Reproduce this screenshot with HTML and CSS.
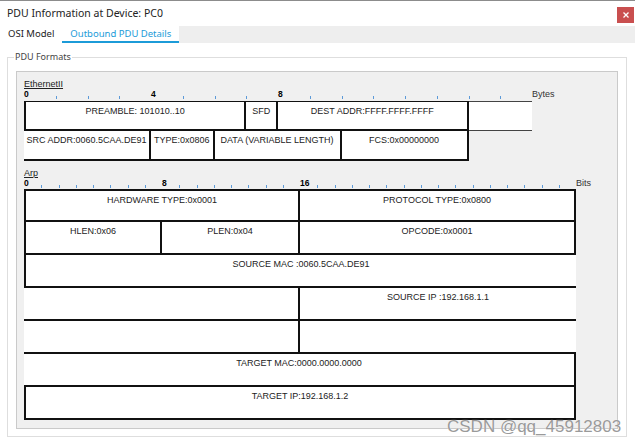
FILE: index.html
```html
<!DOCTYPE html>
<html lang="en">
<head>
    <meta charset="UTF-8">
    <title>PDU Information at Device: PC0</title>
    <link rel="stylesheet" href="styles.css">
</head>
<body>
    <div class="window">
        <div class="titlebar">
            <span class="title">PDU Information at Device: PC0</span>
            <button class="close" aria-label="Close">
                <svg width="6" height="6" viewBox="0 0 6 6"><path d="M0.5 0.5 L5.5 5.5 M5.5 0.5 L0.5 5.5" stroke="#fff" stroke-width="1.3"/></svg>
            </button>
        </div>
        <div class="tabs">
            <div class="tab">OSI Model</div>
            <div class="tab active">Outbound PDU Details</div>
            <div class="tab-fill"></div>
        </div>

        <div class="content">
            <fieldset class="group">
                <legend>PDU Formats</legend>
                <div class="panel">
                    <!-- Ethernet II frame, scale in bytes -->
                    <div class="pdu-name">EthernetII</div>
                    <div class="ruler bytes">
                        <span class="mark num">0</span><span class="mark"></span><span class="mark"></span><span class="mark"></span>
                        <span class="mark num">4</span><span class="mark"></span><span class="mark"></span><span class="mark"></span>
                        <span class="mark num">8</span><span class="mark"></span><span class="mark"></span><span class="mark"></span>
                        <span class="mark"></span><span class="mark"></span><span class="mark"></span><span class="mark"></span>
                        <span class="unit">Bytes</span>
                    </div>
                    <div class="frame eth-frame">
                        <div class="cell s7 edge cap-thin">PREAMBLE: 101010..10</div>
                        <div class="cell s1 cap-thin">SFD</div>
                        <div class="cell s6 cap-thin">DEST ADDR:FFFF.FFFF.FFFF</div>
                        <div class="cell s2 spare"></div>

                        <div class="cell s4">SRC ADDR:0060.5CAA.DE91</div>
                        <div class="cell s2">TYPE:0x0806</div>
                        <div class="cell s4">DATA (VARIABLE LENGTH)</div>
                        <div class="cell s4">FCS:0x00000000</div>
                    </div>

                    <!-- ARP packet, scale in bits -->
                    <div class="pdu-name arp-name">Arp</div>
                    <div class="ruler bits">
                        <span class="mark num">0</span><span class="mark"></span><span class="mark"></span><span class="mark"></span><span class="mark"></span><span class="mark"></span><span class="mark"></span><span class="mark"></span>
                        <span class="mark num">8</span><span class="mark"></span><span class="mark"></span><span class="mark"></span><span class="mark"></span><span class="mark"></span><span class="mark"></span><span class="mark"></span>
                        <span class="mark num">16</span><span class="mark"></span><span class="mark"></span><span class="mark"></span><span class="mark"></span><span class="mark"></span><span class="mark"></span><span class="mark"></span>
                        <span class="mark"></span><span class="mark"></span><span class="mark"></span><span class="mark"></span><span class="mark"></span><span class="mark"></span><span class="mark"></span><span class="mark"></span>
                        <span class="unit">Bits</span>
                    </div>
                    <div class="frame arp-frame">
                        <div class="cell s16 edge cap">HARDWARE TYPE:0x0001</div>
                        <div class="cell s16 cap">PROTOCOL TYPE:0x0800</div>

                        <div class="cell s8 edge">HLEN:0x06</div>
                        <div class="cell s8">PLEN:0x04</div>
                        <div class="cell s16">OPCODE:0x0001</div>

                        <div class="cell s32 edge open">SOURCE MAC :0060.5CAA.DE91</div>

                        <div class="cell s16"></div>
                        <div class="cell s16 open">SOURCE IP :192.168.1.1</div>

                        <div class="cell s16"></div>
                        <div class="cell s16 open"></div>

                        <div class="cell s32">TARGET MAC:0000.0000.0000</div>

                        <div class="cell s32 edge">TARGET IP:192.168.1.2</div>
                    </div>
                </div>
            </fieldset>
        </div>

        <div class="watermark">CSDN @qq_45912803</div>
    </div>
</body>
</html>
```

FILE: styles.css
```css
body {
    margin: 0;
    font-family: "Noto Sans", sans-serif;
    background-color: #fff;
    color: #222;
}
.window {
    position: relative;
    width: 635px;
    height: 446px;
    box-sizing: border-box;
    border-top: 1px solid #8c8c8c;
    overflow: hidden;
}
.titlebar {
    height: 25px;
    display: flex;
    justify-content: space-between;
    padding: 0 1px 0 7px;
}
.title {
    font-size: 10.5px;
    line-height: 25px;
}
.close {
    width: 17px;
    height: 16px;
    margin-top: 6px;
    padding: 0;
    border: none;
    background-color: #c94f4f;
    display: flex;
    align-items: center;
    justify-content: center;
}
.tabs {
    display: flex;
    height: 17px;
    font-size: 9.5px;
}
.tab {
    padding: 0 8px;
    line-height: 15px;
    background-color: #fff;
    border-bottom: 2px solid transparent;
}
.tab.active {
    color: #1c9bd8;
    border-bottom-color: #1c9bd8;
}
.tab-fill {
    flex: 1;
    background-color: #eee;
}
.content {
    padding: 8px 8px 0 7px;
}
.group {
    margin: 0;
    padding: 8px 8px 7px 8px;
    border: 1px solid #dedede;
}
.group legend {
    font-size: 9px;
    line-height: 12px;
    color: #444;
    padding: 0 1px;
    margin-left: -2px;
}
.panel {
    height: 358px;
    box-sizing: border-box;
    padding: 7px 0 0 7px;
    background-color: #f0f0f0;
    border: 1px solid #cacaca;
    font-family: "Liberation Sans", Arial, sans-serif;
    font-size: 9px;
    color: #222;
}
.pdu-name {
    line-height: 10px;
    text-decoration: underline;
}
.arp-name {
    margin-top: 7px;
}
.ruler {
    display: flex;
    height: 11px;
    line-height: 11px;
}
.ruler.bytes {
    margin-bottom: 1px;
}
.mark {
    flex: none;
    position: relative;
}
.bytes .mark {
    width: 31.75px;
}
.bits .mark {
    width: 17.25px;
}
.mark:empty::after {
    content: "";
    position: absolute;
    left: 0;
    bottom: 1px;
    width: 1px;
    height: 3px;
    background-color: #5c9ad8;
}
.num {
    font-size: 8.5px;
    font-weight: bold;
    color: #000;
}
.unit {
    color: #333;
}
.frame {
    display: grid;
}
.eth-frame {
    grid-template-columns: repeat(16, 31.75px);
    grid-auto-rows: 30px;
}
.arp-frame {
    grid-template-columns: repeat(32, 17.25px);
    grid-auto-rows: 33px;
}
.cell {
    box-sizing: border-box;
    padding-top: 4px;
    line-height: 11px;
    text-align: center;
    white-space: nowrap;
    overflow: hidden;
    background-color: #fff;
    border-right: 2px solid #111;
    border-bottom: 2px solid #111;
}
.edge {
    border-left: 2px solid #111;
}
.cap {
    border-top: 2px solid #111;
}
.cap-thin {
    border-top: 1px solid #111;
}
.open {
    border-right: none;
}
.spare {
    border-top: 1px solid #444;
    border-bottom: 1px solid #444;
    border-right: none;
}
.s1 { grid-column: span 1; }
.s2 { grid-column: span 2; }
.s4 { grid-column: span 4; }
.s6 { grid-column: span 6; }
.s7 { grid-column: span 7; }
.s8 { grid-column: span 8; }
.s16 { grid-column: span 16; }
.s32 { grid-column: span 32; }
.watermark {
    position: absolute;
    left: 447px;
    top: 417px;
    font-family: "Liberation Sans", Arial, sans-serif;
    font-size: 17px;
    line-height: 17px;
    color: #9a9a9a;
    text-shadow: 0 0 1px #fff;
    white-space: nowrap;
}
```
